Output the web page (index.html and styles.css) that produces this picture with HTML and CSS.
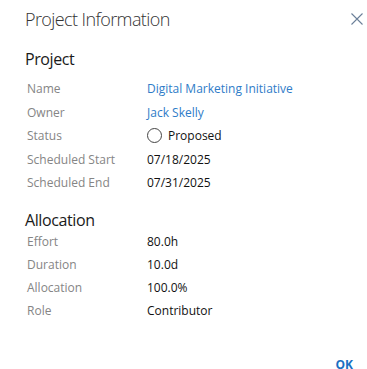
FILE: index.html
```html
<!DOCTYPE html>
<html lang="en">
<head>
  <meta charset="UTF-8">
  <title>Project Information</title>
  <link rel="stylesheet" href="styles.css">
</head>
<body>
  <div class="dialog">
    <header class="dialog-header">
      <h1>Project Information</h1>
      <button class="close" aria-label="Close">
        <svg width="12" height="12" viewBox="0 0 12 12"><path d="M0.5 0.5L11.5 11.5M11.5 0.5L0.5 11.5" stroke="#6b7f99" stroke-width="1.1" fill="none"/></svg>
      </button>
    </header>

    <!-- Project -->
    <section class="group">
      <h2>Project</h2>
      <div class="row"><span class="label">Name</span><a class="value link">Digital Marketing Initiative</a></div>
      <div class="row"><span class="label">Owner</span><a class="value link">Jack Skelly</a></div>
      <div class="row"><span class="label">Status</span><span class="value status"><i class="ring"></i>Proposed</span></div>
      <div class="row"><span class="label">Scheduled Start</span><span class="value">07/18/2025</span></div>
      <div class="row"><span class="label">Scheduled End</span><span class="value">07/31/2025</span></div>
    </section>

    <!-- Allocation -->
    <section class="group">
      <h2>Allocation</h2>
      <div class="row"><span class="label">Effort</span><span class="value">80.0h</span></div>
      <div class="row"><span class="label">Duration</span><span class="value">10.0d</span></div>
      <div class="row"><span class="label">Allocation</span><span class="value">100.0%</span></div>
      <div class="row"><span class="label">Role</span><span class="value">Contributor</span></div>
    </section>

    <footer class="dialog-footer">
      <button class="ok">OK</button>
    </footer>
  </div>
</body>
</html>
```

FILE: styles.css
```css
/* General */
body {
  margin: 0;
  background: #ffffff;
  font-family: "Open Sans", "Liberation Sans", sans-serif;
  color: #111;
  overflow: hidden;
}
.dialog {
  padding: 0 0 0 25px;
  height: 369px;
  box-sizing: border-box;
  display: flex;
  flex-direction: column;
}
/* Header */
.dialog-header {
  display: flex;
  align-items: center;
  justify-content: space-between;
  height: 38px;
}
.dialog-header h1 {
  margin: 0;
  font-size: 18px;
  font-weight: 300;
  color: #333;
  letter-spacing: -0.6px;
}
.close {
  background: none;
  border: none;
  padding: 0;
  margin-right: 4px;
  width: 12px;
  height: 12px;
  cursor: pointer;
  display: flex;
}
/* Groups */
.group h2 {
  margin: 0;
  font-size: 16px;
  font-weight: 400;
  color: #1a1a1a;
  line-height: 22px;
  letter-spacing: -0.4px;
}
.group:first-of-type {
  margin-top: 10px;
}
.group:first-of-type h2 {
  margin-bottom: 7px;
}
.group + .group {
  margin-top: 14px;
}
.group + .group h2 {
  margin-bottom: -1px;
}
.row {
  display: flex;
  align-items: center;
  height: 23.5px;
  font-size: 12px;
}
.group + .group .row {
  height: 23px;
}
.label {
  width: 120px;
  padding-left: 2px;
  color: #858585;
}
.value {
  color: #111;
}
.link {
  color: #2f7cc8;
  text-decoration: none;
}
.status {
  display: flex;
  align-items: center;
  gap: 6px;
}
.ring {
  width: 13px;
  height: 13px;
  border: 1px solid #444;
  border-radius: 50%;
}
/* Footer */
.dialog-footer {
  margin-top: auto;
  margin-bottom: -3px;
  display: flex;
  justify-content: flex-end;
  padding: 0 14px 0 0;
}
.ok {
  background: none;
  border: none;
  padding: 0;
  font-family: inherit;
  font-size: 12px;
  font-weight: 700;
  color: #1a6fc2;
  line-height: 14px;
  cursor: pointer;
}
```
